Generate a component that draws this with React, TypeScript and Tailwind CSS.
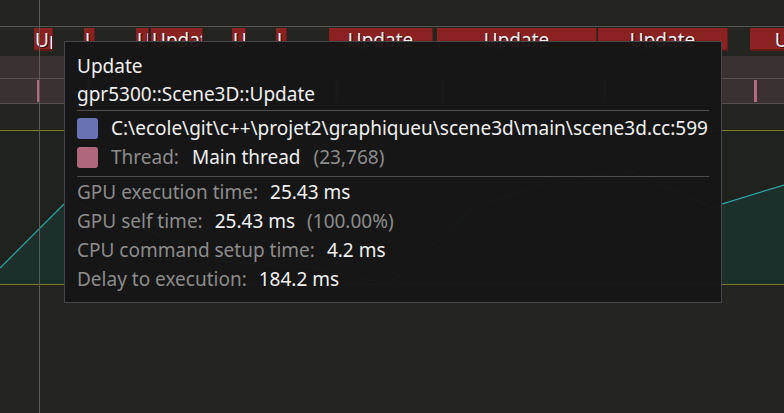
const FONT = "font-['Noto_Sans','Open_Sans',sans-serif]"

type Zone = { left: number; width: number; fits: boolean }

// zones on the timeline row, placement is the data itself
const ZONES: Zone[] = [
  { left: 34, width: 19, fits: false },
  { left: 84, width: 11, fits: false },
  { left: 136, width: 13, fits: false },
  { left: 151, width: 52, fits: false },
  { left: 232, width: 14, fits: false },
  { left: 276, width: 11, fits: false },
  { left: 329, width: 104, fits: true },
  { left: 437, width: 160, fits: true },
  { left: 598, width: 130, fits: true },
  { left: 750, width: 116, fits: true },
]

const TICKS = [37, 87, 141, 282, 335, 441, 603, 754]

const GRAPH_POINTS: [number, number][] = [
  [0, 138],
  [68, 70],
  [227, 132],
  [310, 137],
  [390, 154],
  [470, 80],
  [552, 50],
  [632, 42],
  [712, 77],
  [784, 55],
]

function ZoneBox({ zone }: { zone: Zone }) {
  return (
    <div
      className={`absolute top-0 h-[23px] flex items-center pt-[3px] overflow-hidden bg-[#8b2222] border-r border-b-2 border-[#641a1a] ${
        zone.fits ? 'justify-center' : 'justify-start pl-[1px]'
      }`}
      style={{ left: zone.left, width: zone.width }}
    >
      <span className="text-[19px] leading-none text-[#f2f2f2] whitespace-nowrap [text-shadow:1px_1px_0_#2a0a0a]">
        Update
      </span>
    </div>
  )
}

function Graph() {
  const line = GRAPH_POINTS.map(([x, y]) => `${x},${y}`).join(' ')
  const area = `0,154 ${line} 784,154`
  return (
    <svg width="784" height="156" className="block">
      <rect x="0" y="0" width="784" height="155" fill="#1f221d" />
      <polygon points={area} fill="#1d2f2b" />
      <polyline points={line} fill="none" stroke="#2fa8a8" strokeWidth="1.2" />
      <line x1="0" y1="0.5" x2="784" y2="0.5" stroke="#7e7b26" />
      <line x1="0" y1="154.5" x2="784" y2="154.5" stroke="#7e7b26" />
    </svg>
  )
}

function Tooltip() {
  return (
    <div className="absolute left-[64px] top-[41px] w-[658px] h-[262px] border border-[#45454d] bg-[rgba(22,22,22,0.97)] px-[12px] pt-[10px] text-[19px] text-[#f0f0f0]">
      <div className="h-[28px] flex items-center">Update</div>
      <div className="h-[28px] flex items-center">gpr5300::Scene3D::Update</div>
      <div className="mt-[2px] h-px bg-[#4e4e4e]" />
      <div className="mt-[3px] h-[29px] flex items-center gap-[13px]">
        <span className="w-[21px] h-[21px] rounded-[3px] bg-[#6a71b5]" />
        <span>C:\ecole\git\c++\projet2\graphiqueu\scene3d\main\scene3d.cc:599</span>
      </div>
      <div className="h-[29px] flex items-center gap-[13px]">
        <span className="w-[21px] h-[21px] rounded-[3px] bg-[#b0677b]" />
        <span className="text-[#8c8c8c]">Thread:</span>
        <span>Main thread</span>
        <span className="text-[#8c8c8c]">(23,768)</span>
      </div>
      <div className="mt-[4px] h-px bg-[#4e4e4e]" />
      <div className="mt-[1px] h-[29px] flex items-center gap-[12px]">
        <span className="text-[#8c8c8c]">GPU execution time:</span>
        <span>25.43 ms</span>
      </div>
      <div className="h-[29px] flex items-center gap-[12px]">
        <span className="text-[#8c8c8c]">GPU self time:</span>
        <span>25.43 ms</span>
        <span className="text-[#8c8c8c]">(100.00%)</span>
      </div>
      <div className="h-[29px] flex items-center gap-[12px]">
        <span className="text-[#8c8c8c]">CPU command setup time:</span>
        <span>4.2 ms</span>
      </div>
      <div className="h-[29px] flex items-center gap-[12px]">
        <span className="text-[#8c8c8c]">Delay to execution:</span>
        <span>184.2 ms</span>
      </div>
    </div>
  )
}

export default function App() {
  return (
    <div className={`relative w-[784px] h-[413px] overflow-hidden bg-[#242520] ${FONT}`}>
      <div className="h-[26px]" />
      <div className="h-px bg-[#53534d]" />
      {/* zone row */}
      <div className="relative mt-[1px] h-[24px]">
        {ZONES.map((z) => (
          <ZoneBox key={z.left} zone={z} />
        ))}
      </div>
      <div className="h-[4px]" />
      {/* thread bands */}
      <div className="h-[22px] bg-[#3a3230]" />
      <div className="h-px bg-[#5a504b]" />
      <div className="relative h-[24px] bg-[#3a3230]">
        {TICKS.map((x) => (
          <div
            key={x}
            className="absolute top-[1px] h-[22px] w-[3px] bg-[#b5697f]"
            style={{ left: x }}
          />
        ))}
      </div>
      <div className="h-px bg-[#5a504b]" />
      <div className="h-[26px]" />
      <Graph />
      {/* cursor line */}
      <div className="absolute left-[39px] top-0 h-full w-px bg-[#5b5b56]" />
      <Tooltip />
    </div>
  )
}
